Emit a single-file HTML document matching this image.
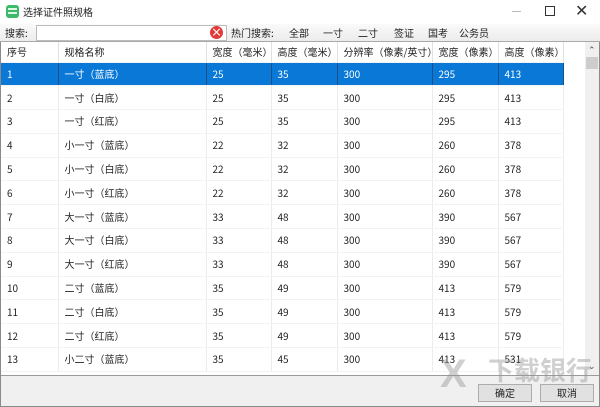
<!DOCTYPE html>
<html><head><meta charset="utf-8"><style>
*{margin:0;padding:0;box-sizing:border-box}
html,body{width:600px;height:407px;overflow:hidden}
body{background:#fff;font-family:"Noto Sans CJK SC",sans-serif;font-size:10px;line-height:12px;color:#222;position:relative}
.win{position:absolute;left:0;top:0;width:600px;height:407px;border:1px solid #8a8a8a;border-top:none}
.title{position:absolute;left:0;top:0;width:600px;height:24px;background:#fff}
.icon{position:absolute;left:6px;top:5px;width:13px;height:13px;border-radius:3px;background:#3cba6a}
.icon i{position:absolute;width:3px;height:2px;background:#dff5e6}
.ttext{position:absolute;left:23px;top:6px;font-size:10px}
.tb{position:absolute;left:0;top:24px;width:600px;height:18px;background:linear-gradient(#fafafa,#ececec);border-bottom:1px solid #a9a9a9}
.tb span{position:absolute;top:3px}
.search{position:absolute;left:36px;top:1px;width:191px;height:16px;border:1px solid #bcbcbc;background:#fff}
.clr{position:absolute;left:210px;top:2px;width:13px;height:13px;border-radius:50%;background:#e03a3a;color:#fff;font-size:11px;line-height:13px;text-align:center;font-weight:bold}
table{position:absolute;left:1px;top:42px;width:562px;border-collapse:collapse;table-layout:fixed}
td,th{font-weight:normal;text-align:left;padding-left:6px;border-right:1px solid #ececec;border-bottom:1px solid #f3f3f3;white-space:nowrap;overflow:hidden;vertical-align:middle;line-height:12px}
th{height:20px;border-right:1px solid #e0e0e0}
td{height:23.8px}
tr.sel td{background:#0a78d7;color:#fff;border-right:1px solid #1b4f8a}
.sb{position:absolute;left:585px;top:42px;width:14px;height:333px;background:#f0f0f0}
.thumb{position:absolute;left:586px;top:57px;width:12px;height:12px;background:#cdcdcd}
.bottom{position:absolute;left:1px;top:375px;width:598px;height:31px;background:#f0f0f0;border-top:1px solid #9a9a9a}
.btn{position:absolute;top:8px;width:54px;height:18px;border:1px solid #adadad;background:#e1e1e1;text-align:center;line-height:16px}
</style></head><body>
<div class="win"></div>
<div class="title">
<div class="icon"><i style="left:2px;top:3px"></i><i style="left:5px;top:3px"></i><i style="left:8px;top:3px"></i><i style="left:2px;top:7px"></i><i style="left:5px;top:7px"></i><i style="left:8px;top:7px"></i></div>
<div class="ttext">选择证件照规格</div>
<div style="position:absolute;left:512px;top:11px;width:9px;height:1px;background:#bbb"></div>
<div style="position:absolute;left:545px;top:6px;width:10px;height:10px;border:1px solid #333"></div>
<div style="position:absolute;left:575px;top:3px;font-size:16px;line-height:16px;color:#333;font-family:'DejaVu Sans',sans-serif">✕</div>
</div>
<div class="tb">
<span style="left:5px">搜索:</span>
<div class="search"></div><div class="clr">×</div>
<span style="left:231px">热门搜索:</span>
<span style="left:289px">全部</span><span style="left:323px">一寸</span><span style="left:358px">二寸</span><span style="left:394px">签证</span><span style="left:428px">国考</span><span style="left:459px">公务员</span>
</div>
<table>
<colgroup><col style="width:57px"><col style="width:148px"><col style="width:65px"><col style="width:66px"><col style="width:95px"><col style="width:66px"><col style="width:65px"></colgroup>
<tr><th>序号</th><th>规格名称</th><th>宽度（毫米）</th><th>高度（毫米）</th><th>分辨率（像素/英寸）</th><th>宽度（像素）</th><th>高度（像素）</th></tr>
<tr class="sel"><td>1</td><td>一寸（蓝底）</td><td>25</td><td>35</td><td>300</td><td>295</td><td>413</td></tr>
<tr><td>2</td><td>一寸（白底）</td><td>25</td><td>35</td><td>300</td><td>295</td><td>413</td></tr>
<tr><td>3</td><td>一寸（红底）</td><td>25</td><td>35</td><td>300</td><td>295</td><td>413</td></tr>
<tr><td>4</td><td>小一寸（蓝底）</td><td>22</td><td>32</td><td>300</td><td>260</td><td>378</td></tr>
<tr><td>5</td><td>小一寸（白底）</td><td>22</td><td>32</td><td>300</td><td>260</td><td>378</td></tr>
<tr><td>6</td><td>小一寸（红底）</td><td>22</td><td>32</td><td>300</td><td>260</td><td>378</td></tr>
<tr><td>7</td><td>大一寸（蓝底）</td><td>33</td><td>48</td><td>300</td><td>390</td><td>567</td></tr>
<tr><td>8</td><td>大一寸（白底）</td><td>33</td><td>48</td><td>300</td><td>390</td><td>567</td></tr>
<tr><td>9</td><td>大一寸（红底）</td><td>33</td><td>48</td><td>300</td><td>390</td><td>567</td></tr>
<tr><td>10</td><td>二寸（蓝底）</td><td>35</td><td>49</td><td>300</td><td>413</td><td>579</td></tr>
<tr><td>11</td><td>二寸（白底）</td><td>35</td><td>49</td><td>300</td><td>413</td><td>579</td></tr>
<tr><td>12</td><td>二寸（红底）</td><td>35</td><td>49</td><td>300</td><td>413</td><td>579</td></tr>
<tr><td>13</td><td>小二寸（蓝底）</td><td>35</td><td>45</td><td>300</td><td>413</td><td>531</td></tr>
</table>
<div class="sb"></div><div class="thumb"></div>
<div style="position:absolute;left:588px;top:44px;font-size:9px;color:#555">⌃</div>
<div style="position:absolute;left:588px;top:360px;font-size:9px;color:#555">⌄</div>
<div class="bottom">
<div class="btn" style="left:477px">确定</div>
<div class="btn" style="left:539px">取消</div>
</div>
<div style="position:absolute;left:488px;top:355px;font-size:26px;line-height:30px;white-space:nowrap;color:rgba(150,150,150,.45);font-weight:bold">下载银行</div>
<div style="position:absolute;left:440px;top:352px;font-size:40px;line-height:44px;color:rgba(150,150,150,.45);font-weight:bold;font-family:'Liberation Sans',sans-serif">X</div>
</body></html>
